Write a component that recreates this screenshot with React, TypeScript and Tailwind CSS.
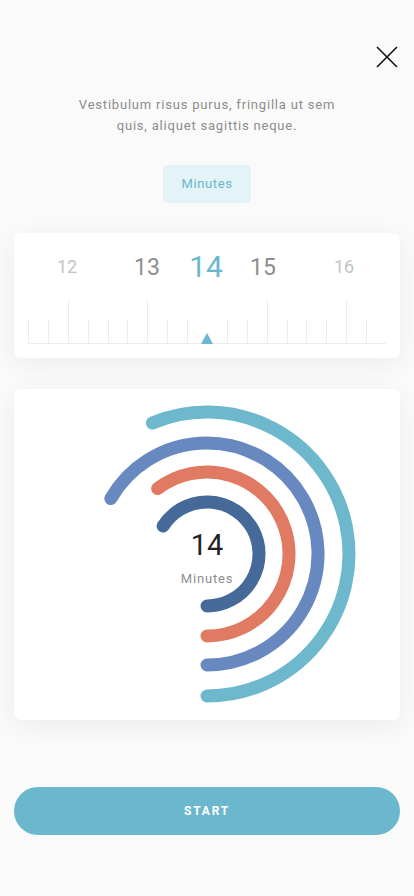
const ticks = Array.from({ length: 19 }, (_, i) => i);
const tall = [2, 6, 12, 16];

const numbers = [
  { n: "12", x: 39, cls: "text-[18px] text-[#c4c4c4]" },
  { n: "13", x: 119, cls: "text-[23px] text-[#8e8e8e]" },
  { n: "14", x: 178, cls: "text-[30px] text-[#6bb7cd]" },
  { n: "15", x: 235, cls: "text-[23px] text-[#8e8e8e]" },
  { n: "16", x: 316, cls: "text-[18px] text-[#c4c4c4]" },
];

const arcs = [
  { r: 142, start: 22.6, color: "#6db8cd" },
  { r: 111, start: 60, color: "#6889bf" },
  { r: 82, start: 37, color: "#e07a62" },
  { r: 52, start: 57.5, color: "#456a9a" },
];

function arcPath(cx: number, cy: number, r: number, startDeg: number) {
  const a = (-startDeg * Math.PI) / 180;
  const x1 = cx + r * Math.sin(a);
  const y1 = cy - r * Math.cos(a);
  const x2 = cx;
  const y2 = cy + r;
  return `M ${x1} ${y1} A ${r} ${r} 0 1 1 ${x2} ${y2}`;
}

export default function App() {
  return (
    <div className="min-h-[896px] bg-[#fafafa] px-[14px] font-['Roboto',sans-serif] flex flex-col">
      <div className="flex justify-end pt-[45px] pr-[1px]">
        <button className="w-[24px] h-[24px] flex items-center justify-center">
          <svg width="24" height="24" viewBox="0 0 24 24">
            <path d="M2 2 L22 22 M22 2 L2 22" stroke="#111" strokeWidth="1.6" fill="none" />
          </svg>
        </button>
      </div>

      <p className="mt-[25px] mx-auto max-w-[280px] text-center text-[13px] leading-[21px] tracking-[0.8px] text-[#8c8c8c]">
        Vestibulum risus purus, fringilla ut sem quis, aliquet sagittis neque.
      </p>

      <div className="mt-[29px] flex justify-center">
        <div className="w-[88px] h-[38px] rounded-[5px] bg-[#e3f3f8] flex items-center justify-center text-[13px] tracking-[0.6px] text-[#6bb7cd]">
          Minutes
        </div>
      </div>

      <div className="mt-[30px] bg-white rounded-[7px] shadow-[0_6px_28px_rgba(0,0,0,0.06)] px-[14px] pt-[14px] pb-[13px]">
        <div className="relative h-[40px]">
          {numbers.map((d) => (
            <span
              key={d.n}
              className={`absolute top-1/2 -translate-x-1/2 -translate-y-1/2 leading-none ${d.cls}`}
              style={{ left: d.x }}
            >
              {d.n}
            </span>
          ))}
        </div>
        <svg className="mt-[12px] block" width="358" height="46" viewBox="0 0 358 46">
          <line x1="0" y1="44.5" x2="358" y2="44.5" stroke="#ececec" strokeWidth="1" />
          {ticks.map((i) => {
            if (i === 9) return null;
            const x = Math.round(i * 19.89) + 0.5;
            return (
              <line
                key={i}
                x1={x}
                x2={x}
                y1={tall.includes(i) ? 1 : 20}
                y2={45}
                stroke="#ececec"
                strokeWidth="1"
              />
            );
          })}
          <polygon points="173,45 179,34 185,45" fill="#6bb7cd" />
        </svg>
      </div>

      <div className="mt-[31px] relative h-[331px] bg-white rounded-[7px] shadow-[0_6px_28px_rgba(0,0,0,0.06)]">
        <svg width="386" height="331" viewBox="0 0 386 331" className="block">
          {arcs.map((a) => (
            <path
              key={a.r}
              d={arcPath(193, 165, a.r, a.start)}
              stroke={a.color}
              strokeWidth="13"
              strokeLinecap="round"
              fill="none"
            />
          ))}
        </svg>
        <div className="absolute left-[193px] top-[140px] -translate-x-1/2 flex flex-col items-center">
          <span className="text-[29px] leading-[32px] text-[#222]">14</span>
          <span className="mt-[10px] text-[13px] leading-[16px] tracking-[0.8px] text-[#8e8e8e]">Minutes</span>
        </div>
      </div>

      <button className="mt-[67px] h-[48px] rounded-full bg-[#6bb7cd] text-white text-[12px] font-bold tracking-[1.8px]">
        START
      </button>
    </div>
  );
}
